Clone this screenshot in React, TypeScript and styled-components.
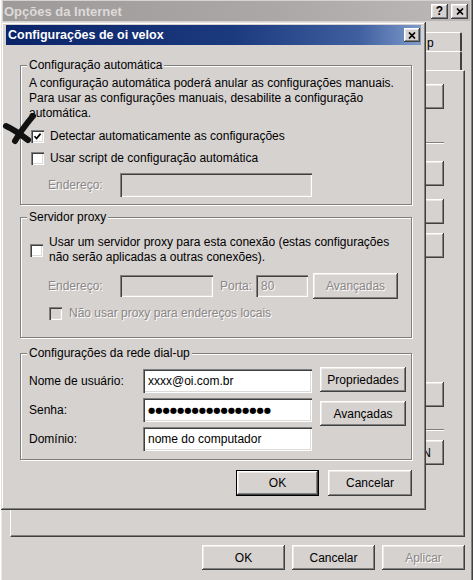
import React from 'react';
import styled, { createGlobalStyle, css } from 'styled-components';

const face = '#d6d2d0';

const GlobalStyle = createGlobalStyle`
  html, body {
    margin: 0;
    padding: 0;
  }

  body {
    width: 473px;
    height: 580px;
    overflow: hidden;
    background: ${face};
    font-family: 'Liberation Sans', Arial, sans-serif;
    font-size: 12px;
    color: #000;
  }
`;

const raised = css`
  box-shadow: inset -1px -1px 0 #404040, inset 1px 1px 0 #fff, inset -2px -2px 0 #808080,
    inset 2px 2px 0 #eceae8;
`;

const sunken = css`
  box-shadow: inset 1px 1px 0 #808080, inset 2px 2px 0 #404040, inset -1px -1px 0 #fff,
    inset -2px -2px 0 #dedad8;
`;

const disabledText = css`
  color: #8a8686;
  text-shadow: 1px 1px 0 #fff;
`;

const Screen = styled.div`
  position: relative;
  width: 473px;
  height: 580px;
  overflow: hidden;
`;

/* ---------- window behind: Opções da Internet ---------- */

const BackWindow = styled.div`
  box-sizing: border-box;
  width: 473px;
  height: 590px;
  margin-top: -2px;
  padding: 3px 3px;
  display: flex;
  flex-direction: column;
  background: ${face};
  ${raised};
`;

const BackTitle = styled.div`
  height: 20px;
  display: flex;
  align-items: center;
  padding: 0 2px 0 1px;
  background: linear-gradient(90deg, #9e9a9a 0%, #aca8a8 60%, #bdb9b8 100%);
  color: #dedad8;
  font-weight: bold;
  font-size: 13px;
`;

const TitleButtons = styled.div`
  margin-left: auto;
  display: flex;
  gap: 3px;
`;

const TitleButton = styled.div`
  box-sizing: border-box;
  width: 17px;
  height: 15px;
  display: flex;
  align-items: center;
  justify-content: center;
  background: ${face};
  color: #000;
  font-size: 12px;
  font-weight: bold;
  ${raised};
`;

const TabRows = styled.div`
  margin-top: 11px;
  padding-right: 8px;
  display: flex;
  flex-direction: column;
`;

const TabRow = styled.div`
  display: flex;
  justify-content: flex-end;
  height: 19px;
`;

const Tab = styled.div<{ $width: number }>`
  box-sizing: border-box;
  width: ${(p) => p.$width}px;
  padding: 3px 4px 0;
  border-top: 1px solid #fff;
  border-left: 1px solid #fff;
  border-right: 2px solid #404040;
  border-radius: 2px 2px 0 0;
  white-space: nowrap;
  overflow: hidden;
`;

const TabPanel = styled.div`
  box-sizing: border-box;
  height: 467px;
  margin: 0 5px 0 7px;
  padding: 13px 20px 0 10px;
  display: flex;
  flex-direction: column;
  align-items: flex-end;
  border-top: 1px solid #fff;
  border-left: 1px solid #fff;
  border-right: 1px solid #404040;
  border-bottom: 1px solid #404040;
  box-shadow: inset -1px -1px 0 #808080;
`;

const PanelButton = styled.div<{ $top: number; $width?: number }>`
  box-sizing: border-box;
  margin-top: ${(p) => p.$top}px;
  width: ${(p) => (p.$width ? `${p.$width}px` : 'auto')};
  height: 25px;
  padding: 0 13px 0 7px;
  display: flex;
  align-items: center;
  justify-content: center;
  white-space: nowrap;
  ${raised};
`;

const PanelSeparator = styled.div<{ $top: number }>`
  align-self: stretch;
  margin-top: ${(p) => p.$top}px;
  border-top: 1px solid #808080;
  border-bottom: 1px solid #fff;
`;

const BackFooter = styled.div`
  margin-top: 8px;
  padding-right: 5px;
  display: flex;
  justify-content: flex-end;
  gap: 7px;
`;

/* ---------- dialog: Configurações de oi velox ---------- */

const Dialog = styled.div`
  position: absolute;
  left: 1px;
  top: 22px;
  box-sizing: border-box;
  width: 425px;
  height: 488px;
  padding: 3px 5px;
  display: flex;
  flex-direction: column;
  background: ${face};
  box-shadow: inset -1px -1px 0 #404040, inset 1px 1px 0 #e4e0de, inset -2px -2px 0 #808080,
    inset 2px 2px 0 #fff;
`;

const DialogTitle = styled.div`
  height: 20px;
  display: flex;
  align-items: center;
  padding: 0 1px 0 2px;
  background: linear-gradient(90deg, #0a246a 0%, #1c3a7e 55%, #3f5f9f 85%, #7f9bcb 100%);
  color: #fff;
  font-weight: bold;
  font-size: 12.5px;
`;

const CloseButton = styled(TitleButton)`
  margin-left: auto;
  width: 16px;
  height: 14px;
`;

const DialogBody = styled.div`
  padding: 0 9px 0 14px;
  display: flex;
  flex-direction: column;
`;

const Group = styled.div<{ $top: number; $pad: string }>`
  position: relative;
  margin-top: ${(p) => p.$top}px;
  padding: ${(p) => p.$pad};
  border: 1px solid #808080;
  box-shadow: 1px 1px 0 #fff, inset 1px 1px 0 #fff;
`;

const Legend = styled.span`
  position: absolute;
  top: -8px;
  left: 6px;
  padding: 0 2px;
  line-height: 14px;
  background: ${face};
`;

const Paragraph = styled.div`
  line-height: 15px;
`;

const Row = styled.div<{ $top?: number; $indent?: number; $gap?: number; $height?: number }>`
  display: flex;
  align-items: center;
  margin-top: ${(p) => p.$top ?? 0}px;
  padding-left: ${(p) => p.$indent ?? 0}px;
  gap: ${(p) => p.$gap ?? 0}px;
  min-height: ${(p) => p.$height ?? 16}px;
`;

const CheckBox = styled.div<{ $disabled?: boolean; $left?: number }>`
  flex: none;
  box-sizing: border-box;
  width: 13px;
  height: 13px;
  margin-left: ${(p) => p.$left ?? 0}px;
  display: flex;
  align-items: center;
  justify-content: center;
  background: ${(p) => (p.$disabled ? face : '#fff')};
  ${sunken};
`;

const Label = styled.span<{ $disabled?: boolean; $width?: number; $left?: number }>`
  flex: none;
  width: ${(p) => (p.$width ? `${p.$width}px` : 'auto')};
  margin-left: ${(p) => p.$left ?? 0}px;
  line-height: 15px;
  ${(p) => p.$disabled && disabledText};
`;

const Field = styled.div<{ $width: number; $height?: number; $disabled?: boolean }>`
  flex: none;
  box-sizing: border-box;
  width: ${(p) => p.$width}px;
  height: ${(p) => p.$height ?? 24}px;
  padding: 0 5px;
  display: flex;
  align-items: center;
  background: ${(p) => (p.$disabled ? face : '#fff')};
  white-space: nowrap;
  overflow: hidden;
  ${sunken};
  ${(p) => p.$disabled && disabledText};
`;

const Dots = styled.span`
  font-family: 'DejaVu Sans', sans-serif;
  font-size: 8.3px;
  letter-spacing: 0;
`;

const Button = styled.div<{
  $width: number;
  $height?: number;
  $disabled?: boolean;
  $default?: boolean;
  $left?: number;
}>`
  flex: none;
  box-sizing: border-box;
  width: ${(p) => p.$width}px;
  height: ${(p) => p.$height ?? 25}px;
  margin-left: ${(p) => p.$left ?? 0}px;
  display: flex;
  align-items: center;
  justify-content: center;
  background: ${face};
  ${raised};
  ${(p) => p.$disabled && disabledText};
  ${(p) =>
    p.$default &&
    css`
      border: 1px solid #000;
    `};
`;

const DialUp = styled.div`
  display: flex;
  align-items: flex-start;
`;

const FieldColumn = styled.div`
  margin-top: 2px;
  display: flex;
  flex-direction: column;
  gap: 5px;
`;

const ButtonColumn = styled.div`
  margin-left: 8px;
  display: flex;
  flex-direction: column;
  gap: 9px;
`;

const DialogFooter = styled.div`
  margin-top: 10px;
  display: flex;
  justify-content: flex-end;
  gap: 9px;
`;

const Marker = styled.svg`
  position: absolute;
  left: 2px;
  top: 113px;
`;

const CheckMark = () => (
  <svg width="9" height="9" viewBox="0 0 9 9">
    <polyline points="1.5,4.2 3.6,6.5 7.6,1.6" fill="none" stroke="#000" strokeWidth="1.7" />
  </svg>
);

const CloseGlyph = () => (
  <svg width="8" height="7" viewBox="0 0 8 7">
    <path d="M1 0.5 L7 6.5 M7 0.5 L1 6.5" stroke="#000" strokeWidth="1.7" />
  </svg>
);

const App: React.FC = () => (
  <Screen>
    <GlobalStyle />
    <BackWindow>
      <BackTitle>
        Opções da Internet
        <TitleButtons>
          <TitleButton>?</TitleButton>
          <TitleButton>
            <CloseGlyph />
          </TitleButton>
        </TitleButtons>
      </BackTitle>
      <TabRows>
        <TabRow>
          <Tab $width={60}>Geral</Tab>
          <Tab $width={80}>Segurança</Tab>
          <Tab $width={90}>Privacidade</Tab>
          <Tab $width={40}>p</Tab>
        </TabRow>
        <TabRow>
          <Tab $width={80}>Conteúdo</Tab>
          <Tab $width={80}>Programas</Tab>
          <Tab $width={110}> </Tab>
        </TabRow>
      </TabRows>
      <TabPanel>
        <PanelButton $top={0} $width={110} />
        <PanelSeparator $top={33} />
        <PanelButton $top={17} $width={110} />
        <PanelButton $top={13} $width={110} />
        <PanelButton $top={9} $width={110} />
        <PanelButton $top={124} $width={110} />
        <PanelSeparator $top={22} />
        <PanelButton $top={9}>Configurações da LAN</PanelButton>
      </TabPanel>
      <BackFooter>
        <Button $width={83}>OK</Button>
        <Button $width={83}>Cancelar</Button>
        <Button $width={83} $disabled>
          Aplicar
        </Button>
      </BackFooter>
    </BackWindow>

    <Dialog>
      <DialogTitle>
        Configurações de oi velox
        <CloseButton>
          <CloseGlyph />
        </CloseButton>
      </DialogTitle>
      <DialogBody>
        <Group $top={20} $pad="10px 10px 7px 8px">
          <Legend>Configuração automática</Legend>
          <Paragraph>
            A configuração automática poderá anular as configurações manuais.
            <br />
            Para usar as configurações manuais, desabilite a configuração
            <br />
            automática.
          </Paragraph>
          <Row $top={7} $gap={6}>
            <CheckBox $left={2}>
              <CheckMark />
            </CheckBox>
            <Label>Detectar automaticamente as configurações</Label>
          </Row>
          <Row $top={6} $gap={6}>
            <CheckBox $left={2} />
            <Label>Usar script de configuração automática</Label>
          </Row>
          <Row $top={7} $indent={19}>
            <Label $disabled $width={72}>
              Endereço:
            </Label>
            <Field $width={192} $disabled />
          </Row>
        </Group>

        <Group $top={12} $pad="17px 10px 16px 8px">
          <Legend>Servidor proxy</Legend>
          <Row $gap={6} $height={30}>
            <CheckBox $left={1} />
            <Label>
              Usar um servidor proxy para esta conexão (estas configurações
              <br />
              não serão aplicadas a outras conexões).
            </Label>
          </Row>
          <Row $top={8} $indent={19} $height={26}>
            <Label $disabled $width={72}>
              Endereço:
            </Label>
            <Field $width={93} $height={22} $disabled />
            <Label $disabled $width={36} $left={7}>
              Porta:
            </Label>
            <Field $width={52} $height={22} $disabled>
              80
            </Field>
            <Button $width={85} $height={26} $left={5} $disabled>
              Avançadas
            </Button>
          </Row>
          <Row $top={6} $indent={20} $gap={7}>
            <CheckBox $disabled />
            <Label $disabled>Não usar proxy para endereços locais</Label>
          </Row>
        </Group>

        <Group $top={15} $pad="13px 6px 8px 8px">
          <Legend>Configurações da rede dial-up</Legend>
          <DialUp>
            <FieldColumn>
              <Row $height={24}>
                <Label $width={114}>Nome de usuário:</Label>
                <Field $width={169}>xxxx@oi.com.br</Field>
              </Row>
              <Row $height={24}>
                <Label $width={114}>Senha:</Label>
                <Field $width={169}>
                  <Dots>●●●●●●●●●●●●●●●●●</Dots>
                </Field>
              </Row>
              <Row $height={24}>
                <Label $width={114}>Domínio:</Label>
                <Field $width={169}>nome do computador</Field>
              </Row>
            </FieldColumn>
            <ButtonColumn>
              <Button $width={86}>Propriedades</Button>
              <Button $width={86}>Avançadas</Button>
            </ButtonColumn>
          </DialUp>
        </Group>

        <DialogFooter>
          <Button $width={83} $height={26} $default>
            OK
          </Button>
          <Button $width={84} $height={26}>
            Cancelar
          </Button>
        </DialogFooter>
      </DialogBody>
    </Dialog>

    <Marker width="36" height="32" viewBox="0 0 36 32">
      <path
        d="M31 3 C26 9 20 16 13 28 M4 13 C11 16 18 21 26 27"
        fill="none"
        stroke="#111"
        strokeWidth="6"
        strokeLinecap="round"
      />
    </Marker>
  </Screen>
);

export default App;
